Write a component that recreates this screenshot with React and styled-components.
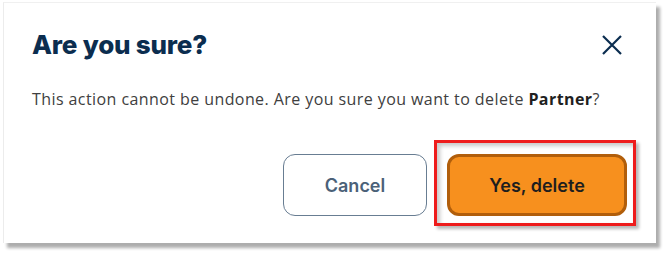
import React from "react";
import styled, { createGlobalStyle } from "styled-components";

const Global = createGlobalStyle`
  html, body { margin: 0; padding: 0; background: #ffffff; }
  body { font-family: "Open Sans", "Liberation Sans", sans-serif; }
  * { box-sizing: border-box; }
`;

const Page = styled.div`
  width: 666px;
  height: 253px;
  padding: 2px 0 0 3px;
  background: #ffffff;
`;

const Dialog = styled.div`
  width: 653px;
  height: 241px;
  background: #ffffff;
  border-left: 1px solid #ececec;
  border-top: 1px solid #f0f0f0;
  box-shadow: 4px 5px 3px rgba(0, 0, 0, 0.32);
  padding: 25px 29px 27px 28px;
  display: flex;
  flex-direction: column;
`;

const Header = styled.div`
  display: flex;
  align-items: center;
  justify-content: space-between;
`;

const Title = styled.h2`
  margin: 0;
  font-family: "Inter", "Liberation Sans", sans-serif;
  font-weight: 800;
  font-size: 26px;
  line-height: 34px;
  color: #0b2d4f;
  letter-spacing: -0.2px;
`;

const CloseButton = styled.button`
  border: 0;
  background: transparent;
  padding: 0;
  margin-right: 5px;
  width: 20px;
  height: 20px;
  display: flex;
  cursor: pointer;
`;

const Message = styled.p`
  margin: 25px 0 0 0;
  font-family: "Open Sans", "Liberation Sans", sans-serif;
  font-size: 16px;
  line-height: 24px;
  letter-spacing: 0.42px;
  color: #404040;
  strong { font-weight: 700; color: #1f1f1f; }
`;

const Footer = styled.div`
  margin-top: auto;
  display: flex;
  justify-content: flex-end;
  align-items: center;
  gap: 20px;
`;

const BaseButton = styled.button`
  height: 62px;
  border-radius: 12px;
  font-family: "Inter", "Liberation Sans", sans-serif;
  font-weight: 600;
  font-size: 18px;
  cursor: pointer;
  display: flex;
  align-items: center;
  justify-content: center;
`;

const CancelButton = styled(BaseButton)`
  width: 144px;
  background: #ffffff;
  border: 1px solid #687d92;
  color: #4b6178;
`;

const Highlight = styled.div`
  position: relative;
  &::before {
    content: "";
    position: absolute;
    left: -13px;
    top: -14px;
    right: -9px;
    bottom: -10px;
    border: 3px solid #ee1c1c;
    box-shadow: 3px 3px 3px rgba(0, 0, 0, 0.28),
      inset 3px 3px 4px rgba(0, 0, 0, 0.22);
    pointer-events: none;
  }
`;

const ConfirmButton = styled(BaseButton)`
  position: relative;
  width: 180px;
  background: #f7901e;
  border: 3px solid #b15e0b;
  color: #1e1e1e;
`;

export default function App() {
  return (
    <>
      <Global />
      <Page>
        <Dialog>
          <Header>
            <Title>Are you sure?</Title>
            <CloseButton aria-label="Close">
              <svg width="20" height="20" viewBox="0 0 20 20">
                <path
                  d="M1 1 L19 19 M19 1 L1 19"
                  stroke="#0b2d4f"
                  strokeWidth="2.2"
                  fill="none"
                />
              </svg>
            </CloseButton>
          </Header>
          <Message>
            This action cannot be undone. Are you sure you want to delete{" "}
            <strong>Partner</strong>?
          </Message>
          <Footer>
            <CancelButton>Cancel</CancelButton>
            <Highlight>
              <ConfirmButton>Yes, delete</ConfirmButton>
            </Highlight>
          </Footer>
        </Dialog>
      </Page>
    </>
  );
}
